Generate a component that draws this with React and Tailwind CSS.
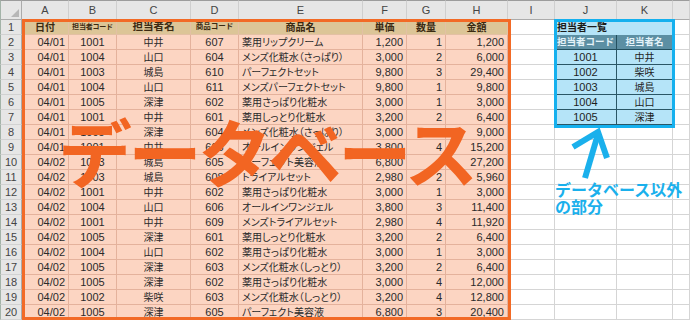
import React from "react";

const letters = ["", "A", "B", "C", "D", "E", "F", "G", "H", "I", "J", "K", ""];

const heads = [
  { t: "日付", c: "text-[10px]" },
  { t: "担当者コード", c: "text-[7px] tracking-[-0.2px]" },
  { t: "担当者名", c: "text-[10.5px]" },
  { t: "商品コード", c: "text-[7.5px]" },
  { t: "商品名", c: "text-[10px]" },
  { t: "単価", c: "text-[10px]" },
  { t: "数量", c: "text-[10px]" },
  { t: "金額", c: "text-[10px]" },
];

const rows = [
  ["04/01", "1001", "中井", "607", "薬用リップクリーム", "1,200", "1", "1,200"],
  ["04/01", "1004", "山口", "604", "メンズ化粧水（さっぱり）", "3,000", "2", "6,000"],
  ["04/01", "1003", "城島", "610", "パーフェクトセット", "9,800", "3", "29,400"],
  ["04/01", "1004", "山口", "611", "メンズパーフェクトセット", "9,800", "1", "9,800"],
  ["04/01", "1005", "深津", "602", "薬用さっぱり化粧水", "3,000", "1", "3,000"],
  ["04/01", "1001", "中井", "601", "薬用しっとり化粧水", "3,200", "2", "6,400"],
  ["04/01", "1005", "深津", "604", "メンズ化粧水（さっぱり）", "3,000", "3", "9,000"],
  ["04/01", "1001", "中井", "606", "オールインワンジェル", "3,800", "4", "15,200"],
  ["04/02", "1003", "城島", "605", "パーフェクト美容液", "6,800", "4", "27,200"],
  ["04/02", "1003", "城島", "608", "トライアルセット", "2,980", "2", "5,960"],
  ["04/02", "1001", "中井", "602", "薬用さっぱり化粧水", "3,000", "1", "3,000"],
  ["04/02", "1004", "山口", "606", "オールインワンジェル", "3,800", "3", "11,400"],
  ["04/02", "1001", "中井", "609", "メンズトライアルセット", "2,980", "4", "11,920"],
  ["04/02", "1005", "深津", "601", "薬用しっとり化粧水", "3,200", "2", "6,400"],
  ["04/02", "1004", "山口", "602", "薬用さっぱり化粧水", "3,000", "1", "3,000"],
  ["04/02", "1005", "深津", "603", "メンズ化粧水（しっとり）", "3,200", "2", "6,400"],
  ["04/02", "1005", "深津", "602", "薬用さっぱり化粧水", "3,000", "4", "12,000"],
  ["04/02", "1002", "柴咲", "603", "メンズ化粧水（しっとり）", "3,200", "4", "12,800"],
  ["04/02", "1005", "深津", "605", "パーフェクト美容液", "6,800", "3", "20,400"],
];

const staff = [
  ["1001", "中井"],
  ["1002", "柴咲"],
  ["1003", "城島"],
  ["1004", "山口"],
  ["1005", "深津"],
];

const align = [
  "justify-end pr-[3px] text-[11px]",
  "justify-center text-[11px]",
  "justify-center text-[10px]",
  "justify-center text-[11px]",
  "justify-start pl-[3px] text-[10px] [font-feature-settings:'palt']",
  "justify-end pr-[3px] text-[11px]",
  "justify-end pr-[3px] text-[11px]",
  "justify-end pr-[3px] text-[11px]",
];

function Cell({ r, c }) {
  // column letters
  if (r === 0) {
    if (c === 0)
      return (
        <div className="flex items-end justify-end pr-[2px] pb-[2px] bg-[#e6e6e6] border-l border-l-[#a3b3a8] border-t border-t-[#9c9c9c] border-r border-r-[#ababab] border-b border-b-[#ababab]">
          <svg width="8" height="8" viewBox="0 0 8 8">
            <path d="M8 0 L8 8 L0 8 Z" fill="#b7b7b7" />
          </svg>
        </div>
      );
    return (
      <div className="flex items-center justify-center bg-[#e6e6e6] border-t border-t-[#9c9c9c] border-r border-r-[#cfcfcf] border-b border-b-[#ababab] text-[11px] text-[#444]">
        {letters[c]}
      </div>
    );
  }

  // row numbers
  if (c === 0)
    return (
      <div className="flex items-center justify-center bg-[#e6e6e6] border-l border-l-[#a3b3a8] border-r border-r-[#ababab] border-b border-b-[#d2d2d2] text-[11px] text-[#444]">
        {r}
      </div>
    );

  // database block A1:H20
  if (c <= 8) {
    if (r === 1)
      return (
        <div
          className={`flex items-center justify-center bg-[#dcc597] border-r border-b border-[#e3c0a4] font-bold text-[#3b2a12] ${heads[c - 1].c}`}
        >
          {heads[c - 1].t}
        </div>
      );
    return (
      <div
        className={`flex items-center bg-[#fcd5c2] border-r border-b border-[#e4b29c] text-[#2a2a2a] whitespace-nowrap overflow-hidden ${align[c - 1]}`}
      >
        {rows[r - 2][c - 1]}
      </div>
    );
  }

  // staff list J1:K7
  if ((c === 10 || c === 11) && r <= 7) {
    if (r === 1)
      return (
        <div className="flex items-center pl-[2px] bg-[#b5e4f8] text-[10px] font-bold text-[#1b1b1b] whitespace-nowrap">
          {c === 10 ? "担当者一覧" : ""}
        </div>
      );
    if (r === 2)
      return (
        <div className="flex items-center justify-center bg-[#5c8fa3] border-r border-b border-[#23505f] text-[9.5px] font-bold text-[#e4f3f9]">
          {c === 10 ? "担当者コード" : "担当者名"}
        </div>
      );
    return (
      <div
        className={`flex items-center justify-center bg-[#b5e4f8] border-r border-b border-[#2a5666] text-[#1e1e1e] ${c === 10 ? "text-[11px]" : "text-[10px]"}`}
      >
        {staff[r - 3][c - 10]}
      </div>
    );
  }

  return <div className="bg-white border-r border-b border-[#d5d5d5]" />;
}

const grid = [];
for (let r = 0; r <= 20; r++) {
  for (let c = 0; c <= 12; c++) grid.push([r, c]);
}

export default function App() {
  return (
    <div className="relative w-[690px] h-[320px] overflow-hidden bg-white font-['Liberation_Sans','Noto_Sans_CJK_JP',sans-serif]">
      <div className="grid grid-cols-[22px_47px_48px_74px_48px_124px_44px_39px_62px_47px_62px_56px_1fr] grid-rows-[20px_repeat(20,15px)] w-[690px]">
        {grid.map(([r, c]) => (
          <Cell key={`${r}-${c}`} r={r} c={c} />
        ))}
      </div>

      {/* range highlights */}
      <div className="absolute left-[22px] top-[19px] w-[489px] h-[301px] border-[3px] border-[#f26a26]" />
      <div className="absolute left-[554px] top-[19px] w-[121px] h-[109px] border-[3px] border-[#15b0ee]" />

      {/* big label */}
      <div className="absolute left-[58px] top-[113px] text-[74px] leading-none tracking-[-4px] font-bold text-[#f26522] whitespace-nowrap font-['Noto_Sans_CJK_JP',sans-serif]">
        データベース
      </div>

      {/* annotation */}
      <svg className="absolute left-[565px] top-[128px]" width="50" height="55" viewBox="0 0 50 55">
        <path d="M20 50 L33 6" stroke="#1ab0ec" strokeWidth="6" fill="none" />
        <path d="M8 19 L33 4 L42 30" stroke="#1ab0ec" strokeWidth="6" fill="none" strokeLinejoin="miter" />
      </svg>
      <div className="absolute left-[555px] top-[181px] text-[16px] leading-[17px] font-bold text-[#1ab0ec] whitespace-nowrap font-['Noto_Sans_CJK_JP',sans-serif]">
        データベース以外
        <br />
        の部分
      </div>
    </div>
  );
}
